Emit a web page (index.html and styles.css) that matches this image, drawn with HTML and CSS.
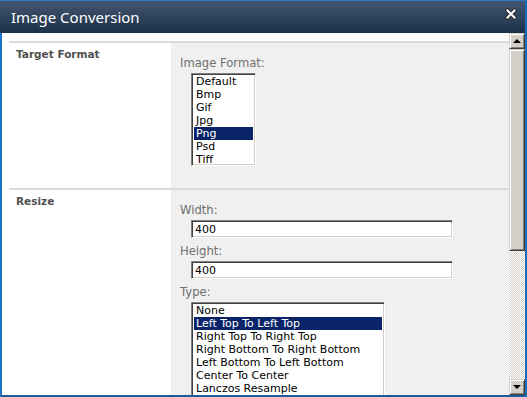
FILE: index.html
```html
<!DOCTYPE html>
<html lang="en">
<head>
    <meta charset="UTF-8">
    <title>Image Conversion</title>
    <link rel="stylesheet" href="styles.css">
</head>
<body>
<div class="dialog">
    <div class="dialog-title">
        <span class="dialog-title-text">Image Conversion</span>
        <button class="dialog-close" title="Close">
            <svg width="12" height="12" viewBox="0 0 12 12">
                <path d="M2.5 2.5 L9.5 9.5 M9.5 2.5 L2.5 9.5" stroke="#2b2b2b" stroke-width="4" stroke-linecap="square"/>
                <path d="M2.5 2.5 L9.5 9.5 M9.5 2.5 L2.5 9.5" stroke="#ffffff" stroke-width="2" stroke-linecap="square"/>
            </svg>
        </button>
    </div>

    <div class="dialog-body">
        <div class="page">
            <div class="form-section">
                <div class="form-label">Target Format</div>
                <div class="form-body">
                    <div class="field-label">Image Format:</div>
                    <ul class="listbox listbox-small">
                        <li>Default</li>
                        <li>Bmp</li>
                        <li>Gif</li>
                        <li>Jpg</li>
                        <li class="selected">Png</li>
                        <li>Psd</li>
                        <li>Tiff</li>
                    </ul>
                </div>
            </div>

            <div class="form-section">
                <div class="form-label">Resize</div>
                <div class="form-body">
                    <div class="field-label">Width:</div>
                    <input class="textbox" type="text" value="400">
                    <div class="field-label">Height:</div>
                    <input class="textbox" type="text" value="400">
                    <div class="field-label">Type:</div>
                    <ul class="listbox listbox-wide">
                        <li>None</li>
                        <li class="selected">Left Top To Left Top</li>
                        <li>Right Top To Right Top</li>
                        <li>Right Bottom To Right Bottom</li>
                        <li>Left Bottom To Left Bottom</li>
                        <li>Center To Center</li>
                        <li>Lanczos Resample</li>
                    </ul>
                </div>
            </div>
        </div>

        <div class="scrollbar">
            <div class="scroll-button"><span class="arrow-up"></span></div>
            <div class="scroll-thumb"></div>
            <div class="scroll-track"></div>
            <div class="scroll-button"><span class="arrow-down"></span></div>
        </div>
    </div>
</div>
</body>
</html>
```

FILE: styles.css
```css
* {
    margin: 0;
    padding: 0;
    box-sizing: border-box;
}

body {
    width: 527px;
    height: 397px;
    overflow: hidden;
    background-color: #ffffff;
    font-family: 'DejaVu Sans', Verdana, sans-serif;
    font-size: 11px;
}

.dialog {
    height: 397px;
    display: flex;
    flex-direction: column;
    border-top: 1px solid #2a78c2;
    border-right: 2px solid #1b6cb8;
}

.dialog-title {
    height: 32px;
    flex-shrink: 0;
    display: flex;
    align-items: center;
    justify-content: space-between;
    padding: 0 8px 1px 11px;
    background: linear-gradient(to bottom, #435670, #1d3049);
}

.dialog-title-text {
    color: #ffffff;
    font-family: 'Noto Sans', 'Open Sans', sans-serif;
    font-size: 15px;
}

.dialog-close {
    width: 12px;
    height: 12px;
    background: none;
    border: none;
    display: flex;
    align-items: center;
    justify-content: center;
    margin-top: -5px;
    cursor: pointer;
}

.dialog-body {
    flex: 1;
    display: flex;
    min-height: 0;
    border-left: 2px solid #1b74c8;
    border-bottom: 2px solid #1c5a98;
}

.page {
    flex: 1;
    overflow: hidden;
    padding: 8px 0 0 7px;
    background-color: #ffffff;
}

.form-section {
    display: flex;
    border-top: 2px solid #dadada;
}

.form-label {
    width: 162px;
    flex-shrink: 0;
    padding: 4px 7px;
    color: #4f4f4f;
    font-size: 10.5px;
    font-weight: bold;
    line-height: 14px;
}

.form-body {
    flex: 1;
    background-color: #f0f0f0;
    padding: 13px 9px 22px;
}

.field-label {
    color: #6f6f6f;
    font-size: 11.6px;
    line-height: 14px;
    margin-top: 6px;
}

.field-label:first-child {
    margin-top: 0;
}

.listbox,
.textbox {
    display: block;
    margin: 3px 0 0 11px;
    background-color: #ffffff;
    border: 1px solid;
    border-color: #808080 #ffffff #ffffff #808080;
    box-shadow: inset 1px 1px #404040, inset -1px -1px #d4d0c8;
    font-family: 'DejaVu Sans', Tahoma, sans-serif;
    font-size: 11px;
    color: #000000;
}

.listbox {
    list-style: none;
    padding: 1px 2px;
}

.listbox li {
    height: 13px;
    line-height: 13px;
    padding-left: 2px;
    white-space: nowrap;
}

.listbox li.selected {
    background-color: #0a246a;
    color: #ffffff;
}

.listbox-small {
    width: 65px;
    height: 93px;
}

.listbox-wide {
    width: 194px;
    height: 120px;
}

.textbox {
    width: 262px;
    height: 18px;
    padding: 0 3px;
    outline: none;
}

.scrollbar {
    width: 16px;
    flex-shrink: 0;
    display: flex;
    flex-direction: column;
}

.scroll-button,
.scroll-thumb {
    background-color: #d4d0c8;
    border: 1px solid;
    border-color: #d4d0c8 #404040 #404040 #d4d0c8;
    box-shadow: inset 1px 1px #ffffff, inset -1px -1px #808080;
}

.scroll-button {
    height: 16px;
    flex-shrink: 0;
    display: flex;
    align-items: center;
    justify-content: center;
}

.scroll-thumb {
    height: 202px;
    flex-shrink: 0;
}

.scroll-track {
    flex: 1;
    background: repeating-conic-gradient(#d4d0c8 0 25%, #ffffff 0 50%) 0 0 / 2px 2px;
}

.arrow-up {
    width: 0;
    height: 0;
    border-left: 4px solid transparent;
    border-right: 4px solid transparent;
    border-bottom: 4px solid #000000;
}

.arrow-down {
    width: 0;
    height: 0;
    border-left: 4px solid transparent;
    border-right: 4px solid transparent;
    border-top: 4px solid #000000;
}
```
